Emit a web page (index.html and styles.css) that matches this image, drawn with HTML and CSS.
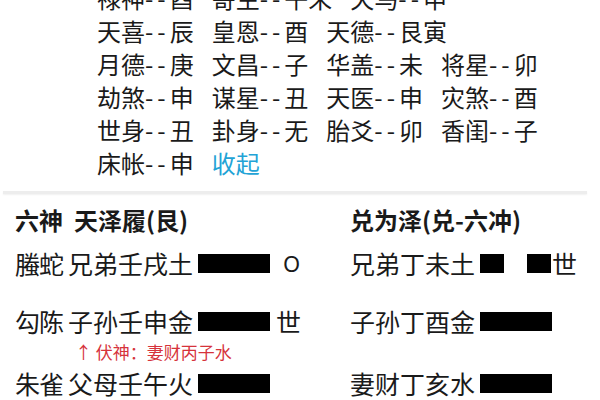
FILE: index.html
```html
<!DOCTYPE html>
<html lang="zh-CN">
<head>
<meta charset="utf-8">
<link rel="stylesheet" href="styles.css">
</head>
<body>
<div class="shensha">
  <div class="row"><span class="it">禄神<span class="d">--</span>酉</span><span class="it">寄生<span class="d">--</span>午未</span><span class="it">天马<span class="d">--</span>申</span></div>
  <div class="row"><span class="it">天喜<span class="d">--</span>辰</span><span class="it">皇恩<span class="d">--</span>酉</span><span class="it">天德<span class="d">--</span>艮寅</span></div>
  <div class="row"><span class="it">月德<span class="d">--</span>庚</span><span class="it">文昌<span class="d">--</span>子</span><span class="it">华盖<span class="d">--</span>未</span><span class="it">将星<span class="d">--</span>卯</span></div>
  <div class="row"><span class="it">劫煞<span class="d">--</span>申</span><span class="it">谋星<span class="d">--</span>丑</span><span class="it">天医<span class="d">--</span>申</span><span class="it">灾煞<span class="d">--</span>酉</span></div>
  <div class="row"><span class="it">世身<span class="d">--</span>丑</span><span class="it">卦身<span class="d">--</span>无</span><span class="it">胎爻<span class="d">--</span>卯</span><span class="it">香闺<span class="d">--</span>子</span></div>
  <div class="row"><span class="it">床帐<span class="d">--</span>申</span><span class="it link">收起</span></div>
</div>
<div class="sep"></div>
<div class="gua">
  <div class="title">六神&nbsp;&nbsp;天泽履(艮)</div>
  <div class="title">兑为泽(兑-六冲)</div>

  <div class="cell"><div class="yao"><span class="god">螣蛇</span><span class="nm">兄弟壬戌土</span><span class="yang"></span><span class="mark o">O</span></div></div>
  <div class="cell"><div class="yao"><span class="nm">兄弟丁未土</span><span class="yin"><i></i><i></i></span><span class="mark">世</span></div></div>

  <div class="cell"><div class="yao"><span class="god">勾陈</span><span class="nm">子孙壬申金</span><span class="yang"></span><span class="mark">世</span></div><div class="note">↑ 伏神：妻财丙子水</div></div>
  <div class="cell"><div class="yao"><span class="nm">子孙丁酉金</span><span class="yang"></span></div></div>

  <div class="cell"><div class="yao"><span class="god">朱雀</span><span class="nm">父母壬午火</span><span class="yang"></span></div></div>
  <div class="cell"><div class="yao"><span class="nm">妻财丁亥水</span><span class="yang"></span></div></div>
</div>
</body>
</html>
```

FILE: styles.css
```css
* { box-sizing: border-box; }
html, body { margin: 0; padding: 0; background: #fff; }
body {
  width: 600px;
  height: 400px;
  overflow: hidden;
  font-family: "Noto Sans CJK SC", "Noto Sans", sans-serif;
  color: #1a1a1a;
}
.shensha {
  margin-top: -19px;
  padding-left: 97px;
  padding-bottom: 12px;
}
.row {
  display: flex;
  gap: 18px;
  height: 33px;
  line-height: 33px;
  font-size: 24px;
  white-space: nowrap;
}
.d { letter-spacing: 4px; }
.link { color: #23a3d6; }
.sep {
  height: 3px;
  margin: 0 13px 0 3px;
  background: #ededed;
  box-shadow: 0 1px 2px rgba(0, 0, 0, 0.06);
}
.gua {
  display: grid;
  grid-template-columns: 335px 1fr;
  padding: 11px 0 0 15px;
}
.title {
  font-size: 24px;
  font-weight: bold;
  line-height: 30px;
  margin-bottom: 13px;
  white-space: nowrap;
}
.cell { min-height: 58px; }
.yao {
  display: flex;
  align-items: center;
  height: 30px;
  font-size: 25px;
  white-space: nowrap;
}
.god { margin-right: 5px; letter-spacing: -1px; }
.yang {
  width: 72px;
  height: 19px;
  background: #000;
  margin-left: 5px;
}
.yin {
  display: flex;
  gap: 23px;
  margin-left: 5px;
}
.yin i {
  display: block;
  width: 24px;
  height: 19px;
  background: #000;
}
.mark { margin-left: 6px; }
.mark.o {
  margin-left: 13px;
  font-family: "Noto Sans", sans-serif;
  font-size: 22px;
}
.yin + .mark { margin-left: 1px; }
.note {
  padding-left: 60px;
  font-size: 17px;
  line-height: 32px;
  color: #d6333b;
}
```
